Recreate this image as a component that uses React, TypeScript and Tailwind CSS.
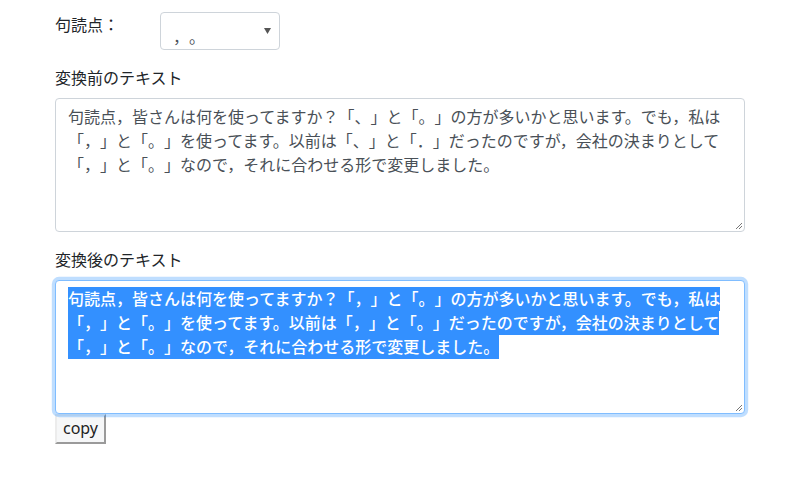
import React from "react";

const font = { fontFamily: '"Noto Sans", "Noto Sans CJK JP", sans-serif' };

export default function App() {
  const before =
    "句読点，皆さんは何を使ってますか？「、」と「。」の方が多いかと思います。でも，私は「，」と「。」を使ってます。以前は「、」と「．」だったのですが，会社の決まりとして「，」と「。」なので，それに合わせる形で変更しました。";
  const after =
    "句読点，皆さんは何を使ってますか？「，」と「。」の方が多いかと思います。でも，私は「，」と「。」を使ってます。以前は「，」と「。」だったのですが，会社の決まりとして「，」と「。」なので，それに合わせる形で変更しました。";
  return (
    <div
      lang="ja"
      className="w-[788px] h-[480px] bg-white text-[#212529] text-[16px] leading-[24px] pt-3 pl-[55px] [text-spacing-trim:space-all]"
      style={font}
    >
      <div className="w-[690px]">
        <div className="flex items-start">
          <div className="w-[105px] pt-[1px]">句読点：</div>
          <div className="relative w-[120px] h-[38px] border border-[#ced4da] rounded-[4px] bg-white text-[#495057] pl-[12px] pt-[12px]">
            <span>，。</span>
            <svg
              className="absolute right-[8px] top-[15px]"
              width="7"
              height="6"
              viewBox="0 0 7 6"
            >
              <polygon points="0,0 7,0 3.5,6" fill="#555" />
            </svg>
          </div>
        </div>
        <div className="mt-4 mb-2">変換前のテキスト</div>
        <div className="relative h-[134px] border border-[#ced4da] rounded-[4px] bg-white text-[#495057] px-3 py-[6px] break-all">
          {before}
          <svg
            className="absolute right-[1px] bottom-[1px]"
            width="9"
            height="9"
            viewBox="0 0 9 9"
          >
            <line x1="8" y1="2" x2="2" y2="8" stroke="#777" strokeWidth="1" />
            <line x1="8" y1="5" x2="5" y2="8" stroke="#777" strokeWidth="1" />
          </svg>
        </div>
        <div className="mt-4 mb-2">変換後のテキスト</div>
        <div className="relative h-[134px] border border-[#80bdff] rounded-[4px] bg-white px-3 py-[6px] shadow-[0_0_0_3.2px_rgba(0,123,255,0.25)] break-all">
          <span className="bg-[#3390ff] text-white py-[1px] [box-decoration-break:clone] font-medium">
            {after}
          </span>
          <svg
            className="absolute right-[1px] bottom-[1px]"
            width="9"
            height="9"
            viewBox="0 0 9 9"
          >
            <line x1="8" y1="2" x2="2" y2="8" stroke="#777" strokeWidth="1" />
            <line x1="8" y1="5" x2="5" y2="8" stroke="#777" strokeWidth="1" />
          </svg>
        </div>
        <button
          className="block w-[51px] h-[30px] bg-[#f6f7f8] border-2 border-t-[#ececec] border-l-[#ececec] border-r-[#9a9a9a] border-b-[#9a9a9a] text-[#222] text-[16px] leading-[22px] pb-[2px]"
          style={font}
        >
          copy
        </button>
      </div>
    </div>
  );
}
